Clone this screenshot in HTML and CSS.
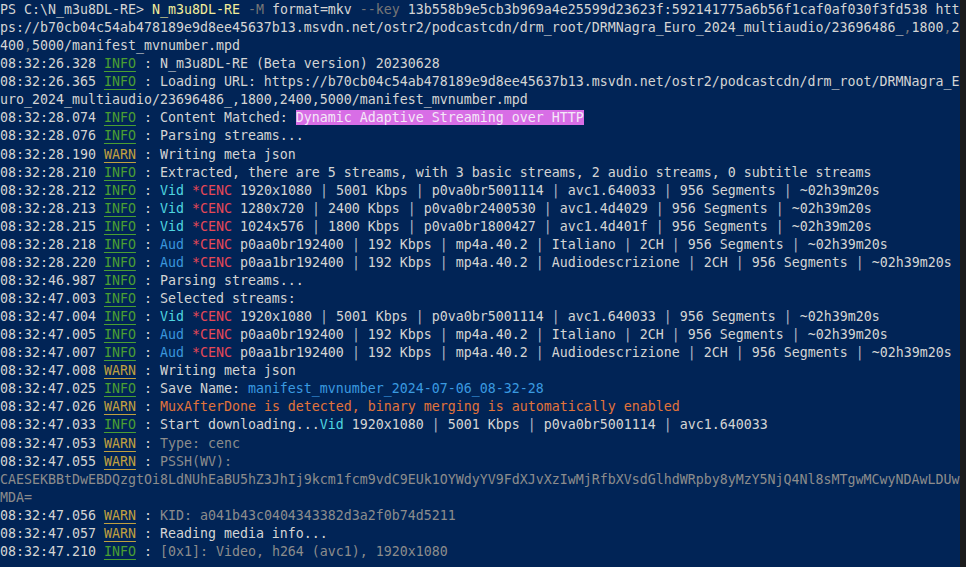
FILE: index.html
```html
<!DOCTYPE html>
<html lang="en">
<head>
<meta charset="utf-8">
<title>PowerShell - N_m3u8DL-RE</title>
<link rel="stylesheet" href="styles.css">
</head>
<body>
<div class="window">
<div class="term">
<div class="ln">PS C:\N_m3u8DL-RE&gt; <span class="y">N_m3u8DL-RE</span> <span class="p">-M</span> format=mkv <span class="p">--key</span> 13b558b9e5cb3b969a4e25599d23623f:592141775a6b56f1caf0af030f3fd538 htt</div>
<div class="ln">ps://b70cb04c54ab478189e9d8ee45637b13.msvdn.net/ostr2/podcastcdn/drm_root/DRMNagra_Euro_2024_multiaudio/23696486_<span class="p">,</span>1800<span class="p">,</span>2</div>
<div class="ln">400<span class="p">,</span>5000/manifest_mvnumber.mpd</div>
<div class="ln">08:32:26.328 <span class="info">INFO</span> : N_m3u8DL-RE (Beta version) 20230628</div>
<div class="ln">08:32:26.365 <span class="info">INFO</span> : Loading URL: https://b70cb04c54ab478189e9d8ee45637b13.msvdn.net/ostr2/podcastcdn/drm_root/DRMNagra_E</div>
<div class="ln">uro_2024_multiaudio/23696486_,1800,2400,5000/manifest_mvnumber.mpd</div>
<div class="ln">08:32:28.074 <span class="info">INFO</span> : Content Matched: <span class="hl">Dynamic Adaptive Streaming over HTTP</span></div>
<div class="ln">08:32:28.076 <span class="info">INFO</span> : Parsing streams...</div>
<div class="ln">08:32:28.190 <span class="warn">WARN</span> : Writing meta json</div>
<div class="ln">08:32:28.210 <span class="info">INFO</span> : Extracted, there are 5 streams, with 3 basic streams, 2 audio streams, 0 subtitle streams</div>
<div class="ln">08:32:28.212 <span class="info">INFO</span> : <span class="vid">Vid</span> <span class="enc">*CENC</span> 1920x1080 <span class="bar">|</span> 5001 Kbps <span class="bar">|</span> p0va0br5001114 <span class="bar">|</span> avc1.640033 <span class="bar">|</span> 956 Segments <span class="bar">|</span> ~02h39m20s</div>
<div class="ln">08:32:28.213 <span class="info">INFO</span> : <span class="vid">Vid</span> <span class="enc">*CENC</span> 1280x720 <span class="bar">|</span> 2400 Kbps <span class="bar">|</span> p0va0br2400530 <span class="bar">|</span> avc1.4d4029 <span class="bar">|</span> 956 Segments <span class="bar">|</span> ~02h39m20s</div>
<div class="ln">08:32:28.215 <span class="info">INFO</span> : <span class="vid">Vid</span> <span class="enc">*CENC</span> 1024x576 <span class="bar">|</span> 1800 Kbps <span class="bar">|</span> p0va0br1800427 <span class="bar">|</span> avc1.4d401f <span class="bar">|</span> 956 Segments <span class="bar">|</span> ~02h39m20s</div>
<div class="ln">08:32:28.218 <span class="info">INFO</span> : <span class="aud">Aud</span> <span class="enc">*CENC</span> p0aa0br192400 <span class="bar">|</span> 192 Kbps <span class="bar">|</span> mp4a.40.2 <span class="bar">|</span> Italiano <span class="bar">|</span> 2CH <span class="bar">|</span> 956 Segments <span class="bar">|</span> ~02h39m20s</div>
<div class="ln">08:32:28.220 <span class="info">INFO</span> : <span class="aud">Aud</span> <span class="enc">*CENC</span> p0aa1br192400 <span class="bar">|</span> 192 Kbps <span class="bar">|</span> mp4a.40.2 <span class="bar">|</span> Audiodescrizione <span class="bar">|</span> 2CH <span class="bar">|</span> 956 Segments <span class="bar">|</span> ~02h39m20s</div>
<div class="ln">08:32:46.987 <span class="info">INFO</span> : Parsing streams...</div>
<div class="ln">08:32:47.003 <span class="info">INFO</span> : Selected streams:</div>
<div class="ln">08:32:47.004 <span class="info">INFO</span> : <span class="vid">Vid</span> <span class="enc">*CENC</span> 1920x1080 <span class="bar">|</span> 5001 Kbps <span class="bar">|</span> p0va0br5001114 <span class="bar">|</span> avc1.640033 <span class="bar">|</span> 956 Segments <span class="bar">|</span> ~02h39m20s</div>
<div class="ln">08:32:47.005 <span class="info">INFO</span> : <span class="aud">Aud</span> <span class="enc">*CENC</span> p0aa0br192400 <span class="bar">|</span> 192 Kbps <span class="bar">|</span> mp4a.40.2 <span class="bar">|</span> Italiano <span class="bar">|</span> 2CH <span class="bar">|</span> 956 Segments <span class="bar">|</span> ~02h39m20s</div>
<div class="ln">08:32:47.007 <span class="info">INFO</span> : <span class="aud">Aud</span> <span class="enc">*CENC</span> p0aa1br192400 <span class="bar">|</span> 192 Kbps <span class="bar">|</span> mp4a.40.2 <span class="bar">|</span> Audiodescrizione <span class="bar">|</span> 2CH <span class="bar">|</span> 956 Segments <span class="bar">|</span> ~02h39m20s</div>
<div class="ln">08:32:47.008 <span class="warn">WARN</span> : Writing meta json</div>
<div class="ln">08:32:47.025 <span class="info">INFO</span> : Save Name: <span class="save">manifest_mvnumber_2024-07-06_08-32-28</span></div>
<div class="ln">08:32:47.026 <span class="warn">WARN</span> : <span class="org">MuxAfterDone is detected, binary merging is automatically enabled</span></div>
<div class="ln">08:32:47.033 <span class="info">INFO</span> : Start downloading...<span class="vid">Vid</span> 1920x1080 <span class="bar">|</span> 5001 Kbps <span class="bar">|</span> p0va0br5001114 <span class="bar">|</span> avc1.640033</div>
<div class="ln">08:32:47.053 <span class="warn">WARN</span> : <span class="g">Type: cenc</span></div>
<div class="ln">08:32:47.055 <span class="warn">WARN</span> : <span class="g">PSSH(WV):</span></div>
<div class="ln g">CAESEKBBtDwEBDQzgtOi8LdNUhEaBU5hZ3JhIj9kcm1fcm9vdC9EUk1OYWdyYV9FdXJvXzIwMjRfbXVsdGlhdWRpby8yMzY5NjQ4Nl8sMTgwMCwyNDAwLDUw</div>
<div class="ln g">MDA=</div>
<div class="ln">08:32:47.056 <span class="warn">WARN</span> : <span class="g">KID: a041b43c0404343382d3a2f0b74d5211</span></div>
<div class="ln">08:32:47.057 <span class="warn">WARN</span> : Reading media info...</div>
<div class="ln">08:32:47.210 <span class="info">INFO</span> : <span class="g">[0x1]: Video, h264 (avc1), 1920x1080</span></div>
</div>
<div class="scroll"></div>
</div>
</body>
</html>
```

FILE: styles.css
```css
html, body {
  margin: 0;
  padding: 0;
  background: #012456;
  overflow: hidden;
}
.window {
  display: flex;
  width: 966px;
  height: 567px;
}
.term {
  flex: 1;
  padding-top: 1px;
  font-family: "DejaVu Sans Mono", "Liberation Mono", monospace;
  font-size: 13.29px;
  line-height: 18.07px;
  color: #d4d4d4;
  overflow: hidden;
}
.scroll {
  width: 6px;
  background: #1b1b1c;
}
.ln {
  height: 18.07px;
  white-space: pre;
}
.y { color: #f3ed9a; }
.p { color: #767676; }
.info, .warn {
  text-decoration: underline;
  text-decoration-thickness: 1px;
  text-underline-offset: 3px;
}
.info { color: #4a9e32; }
.warn { color: #c0a040; }
.hl { background: #d86ee6; color: #f4e8f8; }
.vid { color: #4fd6e0; }
.aud { color: #3a96dd; }
.enc { color: #e74856; }
.bar { color: #b0b8c8; }
.save { color: #3a9ae0; }
.org { color: #e2733a; }
.g { color: #8c8c8c; }
```
